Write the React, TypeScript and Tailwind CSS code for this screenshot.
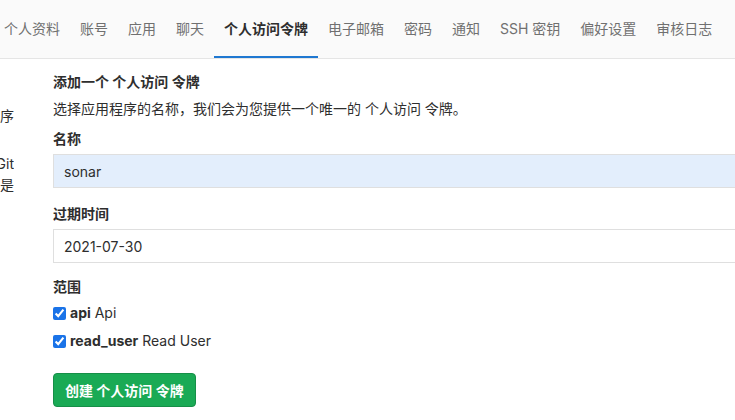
const tabs = [
  "个人资料",
  "账号",
  "应用",
  "聊天",
  "个人访问令牌",
  "电子邮箱",
  "密码",
  "通知",
  "SSH 密钥",
  "偏好设置",
  "审核日志",
];

const font = "font-['Inter','Noto_Sans_CJK_SC',sans-serif]";

export default function App() {
  return (
    <div className={`w-[735px] h-[420px] overflow-hidden bg-white text-[14px] text-[#2e2e2e] ${font}`}>
      {/* top tabs */}
      <div className="h-[59px] bg-[#fafafa] border-b border-[#e5e5e5] overflow-hidden">
        <div className="flex h-full -ml-[6px]">
          {tabs.map((t) => {
            const active = t === "个人访问令牌";
            return (
              <div
                key={t}
                className={`flex items-center px-[10px] h-full whitespace-nowrap shrink-0 border-b-2 ${
                  active ? "border-[#1f78d1] text-[#2e2e2e] font-bold" : "border-transparent text-[#707070]"
                }`}
              >
                {t}
              </div>
            );
          })}
        </div>
      </div>

      <div className="flex">
        {/* left column, cut off by the window */}
        <div className="w-[14px] shrink-0 overflow-hidden relative">
          <div className="absolute right-0 top-0 w-[400px] text-right whitespace-nowrap leading-[21px]">
            <div className="pt-[46px]">您可以为每个需要访问 GitLab API 的应用程序</div>
            <div className="h-[27px]" />
            <div>您也可以使用个人访问令牌通过 HTTP 进行 Git</div>
            <div>身份验证。它们是</div>
          </div>
        </div>

        {/* form */}
        <div className="ml-[39px] flex-1 pt-[13px] flex flex-col">
          <div className="font-bold leading-[20px]">添加一个 个人访问 令牌</div>
          <div className="mt-[7px] leading-[20px]">选择应用程序的名称，我们会为您提供一个唯一的 个人访问 令牌。</div>

          <div className="mt-[10px] font-bold leading-[20px]">名称</div>
          <div className="mt-[5px] -mr-[10px] h-[34px] bg-[#e3eefc] border border-[#dfdfdf] flex items-center px-[10px] text-[#2e2e2e]">
            sonar
          </div>

          <div className="mt-[16px] font-bold leading-[20px]">过期时间</div>
          <div className="mt-[5px] -mr-[10px] h-[34px] bg-white border border-[#dfdfdf] flex items-center px-[10px] text-[#2e2e2e]">
            2021-07-30
          </div>

          <div className="mt-[14px] font-bold leading-[20px]">范围</div>
          <div className="mt-[6px] flex flex-col gap-[8px]">
            <label className="flex items-center gap-[4px] leading-[20px]">
              <input type="checkbox" defaultChecked className="w-[13px] h-[13px] accent-[#1a73e8] m-0" />
              <span>
                <b>api</b> Api
              </span>
            </label>
            <label className="flex items-center gap-[4px] leading-[20px]">
              <input type="checkbox" defaultChecked className="w-[13px] h-[13px] accent-[#1a73e8] m-0" />
              <span>
                <b>read_user</b> Read User
              </span>
            </label>
          </div>

          <div className="mt-[22px]">
            <button
              type="button"
              className="h-[34px] px-[11px] rounded-[4px] bg-[#1aaa55] border border-[#168f48] text-white font-bold"
            >
              创建 个人访问 令牌
            </button>
          </div>
        </div>
      </div>
    </div>
  );
}
